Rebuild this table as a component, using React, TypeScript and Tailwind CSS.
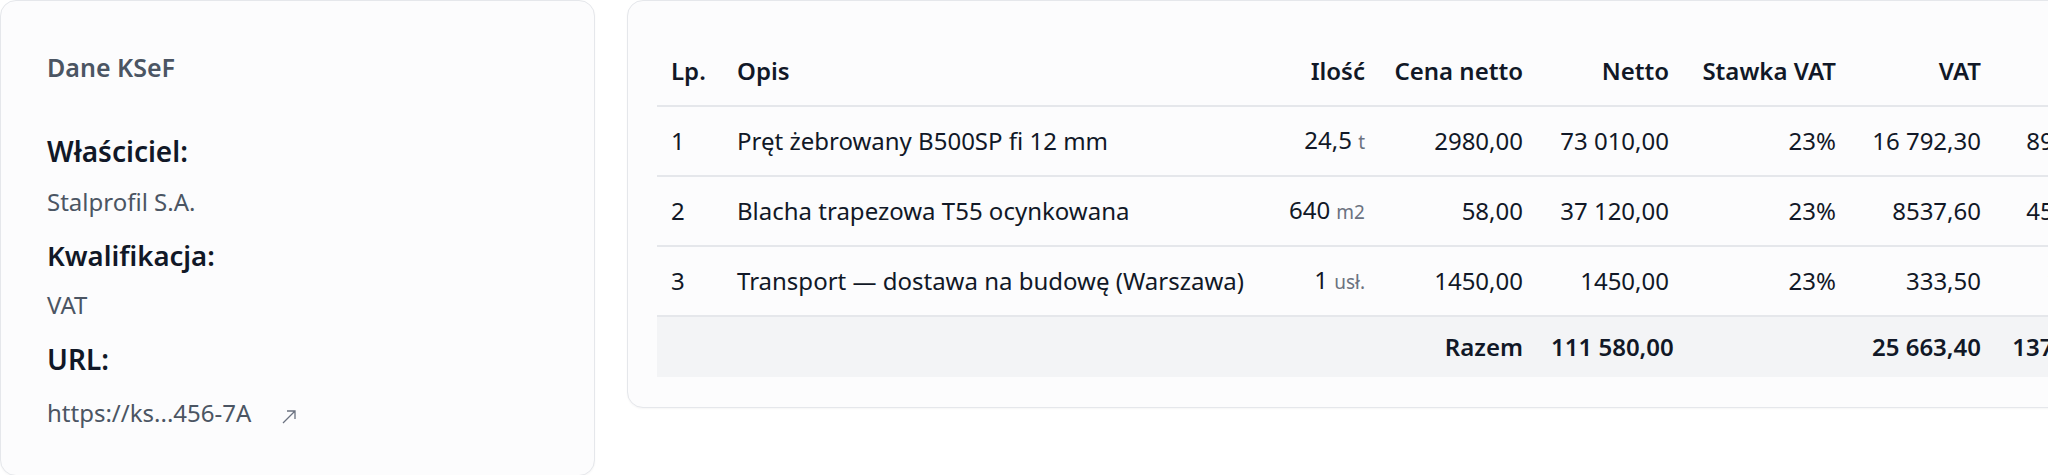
const font = { fontFamily: '"Noto Sans", "Open Sans", sans-serif' }

type Row = {
  lp: number
  opis: string
  qty: string
  unit: string
  price: string
  net: string
  rate: string
  vat: string
  gross: string
}

const rows: Row[] = [
  { lp: 1, opis: 'Pręt żebrowany B500SP fi 12 mm', qty: '24,5', unit: 't', price: '2980,00', net: '73 010,00', rate: '23%', vat: '16 792,30', gross: '89 802,30' },
  { lp: 2, opis: 'Blacha trapezowa T55 ocynkowana', qty: '640', unit: 'm2', price: '58,00', net: '37 120,00', rate: '23%', vat: '8537,60', gross: '45 657,60' },
  { lp: 3, opis: 'Transport — dostawa na budowę (Warszawa)', qty: '1', unit: 'usł.', price: '1450,00', net: '1450,00', rate: '23%', vat: '333,50', gross: '1783,50' },
]

function ExternalArrow() {
  return (
    <svg width="14" height="14" viewBox="0 0 14 14" fill="none" className="ml-[31px] mb-[5px] text-[#6b7280]">
      <path d="M1 13 13 1M5 1h8v8" stroke="currentColor" strokeWidth="1.3" />
    </svg>
  )
}

function KsefCard() {
  return (
    <div className="w-[595px] shrink-0 rounded-2xl border border-[#e5e7eb] bg-[#fcfcfd] px-[46px] pt-[46px] pb-[46px] shadow-[0_1px_2px_rgba(0,0,0,0.04)]">
      <div className="text-[25px] leading-[40px] font-semibold text-[#4b5563]">Dane KSeF</div>

      <div className="mt-[46px]">
        <div className="text-[28px] leading-[36px] font-semibold text-[#111827]">Właściciel:</div>
        <div className="mt-[17px] text-[24px] leading-[32px] text-[#4b5563]">Stalprofil S.A.</div>
      </div>

      <div className="mt-[20px]">
        <div className="text-[27.5px] leading-[36px] font-semibold text-[#111827]">Kwalifikacja:</div>
        <div className="mt-[15px] text-[24px] leading-[32px] text-[#4b5563]">VAT</div>
      </div>

      <div className="mt-[20px]">
        <div className="text-[28px] leading-[36px] font-semibold text-[#111827]">URL:</div>
        <div className="mt-[20px] flex items-end text-[24px] leading-[32px] text-[#4b5563]">
          <span>https://ks...456-7A</span>
          <ExternalArrow />
        </div>
      </div>
    </div>
  )
}

function ItemsCard() {
  const th = 'pt-[24px] pb-[18px] px-[14px] text-[24px] leading-[32px] font-semibold text-[#111827] border-b-2 border-[#e5e7eb] whitespace-nowrap'
  const td = 'py-[17px] px-[14px] text-[24px] leading-[32px] text-[#111827] border-b-2 border-[#e5e7eb] whitespace-nowrap'
  const tf = 'py-[14px] px-[14px] text-[24px] leading-[32px] font-semibold text-[#111827] text-right whitespace-nowrap'

  return (
    <div className="shrink-0 rounded-2xl border border-[#e5e7eb] bg-[#fcfcfd] px-[29px] pt-[30px] pb-[30px] shadow-[0_1px_2px_rgba(0,0,0,0.04)]">
      <table className="w-[1492px] table-fixed border-collapse">
        <colgroup>
          <col className="w-[66px]" />
          <col className="w-[544px]" />
          <col className="w-[112px]" />
          <col className="w-[158px]" />
          <col className="w-[146px]" />
          <col className="w-[167px]" />
          <col className="w-[145px]" />
          <col className="w-[154px]" />
        </colgroup>
        <thead>
          <tr>
            <th className={`${th} text-left`}>Lp.</th>
            <th className={`${th} text-left`}>Opis</th>
            <th className={`${th} text-right`}>Ilość</th>
            <th className={`${th} text-right`}>Cena netto</th>
            <th className={`${th} text-right`}>Netto</th>
            <th className={`${th} text-right`}>Stawka VAT</th>
            <th className={`${th} text-right`}>VAT</th>
            <th className={`${th} text-right`}>Brutto</th>
          </tr>
        </thead>
        <tbody>
          {rows.map((r) => (
            <tr key={r.lp}>
              <td className={`${td} text-left`}>{r.lp}</td>
              <td className={`${td} text-left`}>{r.opis}</td>
              <td className={`${td} text-right`}>
                {r.qty} <span className="text-[19px] text-[#6b7280]">{r.unit}</span>
              </td>
              <td className={`${td} text-right`}>{r.price}</td>
              <td className={`${td} text-right`}>{r.net}</td>
              <td className={`${td} text-right`}>{r.rate}</td>
              <td className={`${td} text-right`}>{r.vat}</td>
              <td className={`${td} text-right`}>{r.gross}</td>
            </tr>
          ))}
        </tbody>
        <tfoot>
          <tr className="bg-[#f3f4f6]">
            <td className={tf}></td>
            <td className={tf}></td>
            <td className={tf}></td>
            <td className={tf}>Razem</td>
            <td className={tf}>111 580,00</td>
            <td className={tf}></td>
            <td className={tf}>25 663,40</td>
            <td className={tf}>137 243,40</td>
          </tr>
        </tfoot>
      </table>
    </div>
  )
}

export default function App() {
  return (
    <div className="w-[2048px] h-[475px] overflow-hidden bg-white" style={font}>
      <div className="flex items-start gap-8">
        <KsefCard />
        <ItemsCard />
      </div>
    </div>
  )
}
